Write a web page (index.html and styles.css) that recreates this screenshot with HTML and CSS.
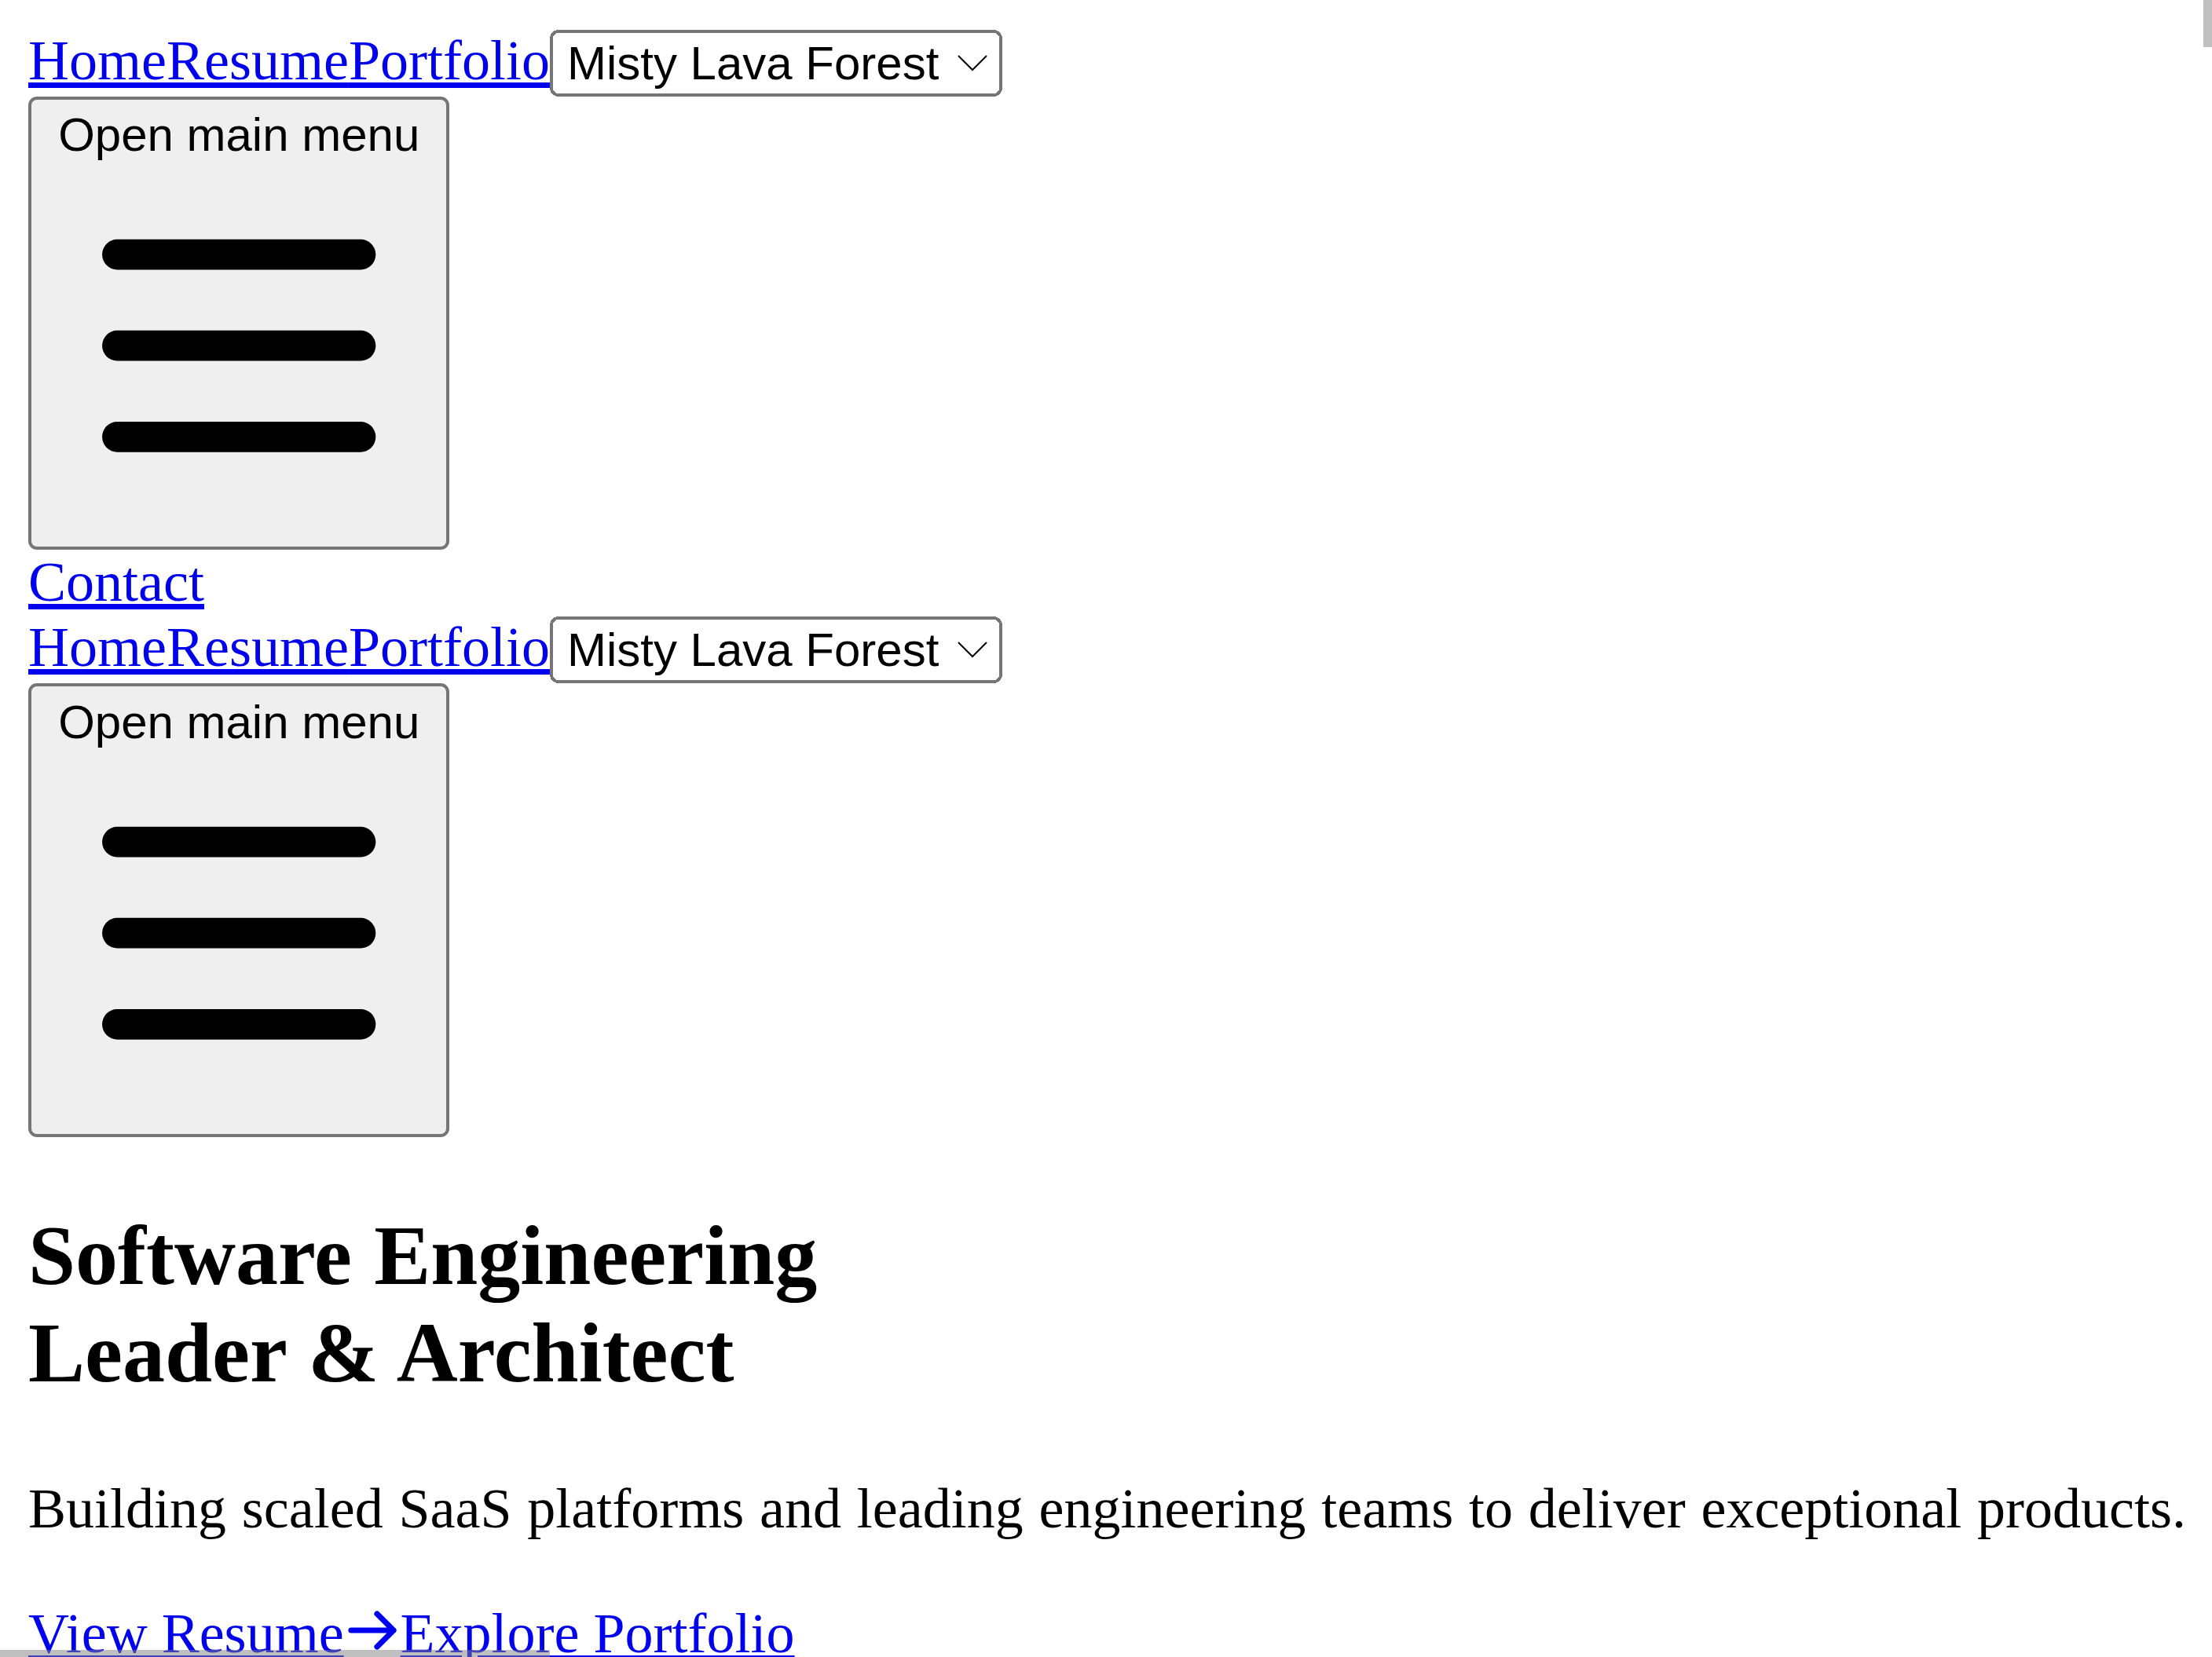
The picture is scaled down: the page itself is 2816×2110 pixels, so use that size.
FILE: index.html
```html
<!DOCTYPE html>
<html lang="en" class="zoomed">
<head>
<meta charset="utf-8">
<title>Software Engineering Leader &amp; Architect</title>
<link rel="stylesheet" href="styles.css">
</head>
<body class="page">
<header class="site-header">
  <nav class="nav">
    <div class="nav-main">
      <div class="nav-bar"><a href="#">Home</a><a href="#">Resume</a><a href="#">Portfolio</a><select class="theme-select" aria-label="Theme"><option>Misty Lava Forest</option></select></div>
      <div class="menu-wrap">
        <button class="menu-btn" type="button"><span class="menu-label">Open main menu</span><svg class="menu-icon" viewBox="0 0 24 24" fill="none" stroke="currentColor" stroke-width="2" stroke-linecap="round" stroke-linejoin="round" aria-hidden="true"><path d="M4 6h16M4 12h16M4 18h16"/></svg></button>
      </div>
    </div>
    <div class="nav-contact"><a href="#">Contact</a></div>
    <div class="mobile-menu">
      <div class="nav-bar"><a href="#">Home</a><a href="#">Resume</a><a href="#">Portfolio</a><select class="theme-select" aria-label="Theme"><option>Misty Lava Forest</option></select></div>
      <div class="menu-wrap">
        <button class="menu-btn" type="button"><span class="menu-label">Open main menu</span><svg class="menu-icon" viewBox="0 0 24 24" fill="none" stroke="currentColor" stroke-width="2" stroke-linecap="round" stroke-linejoin="round" aria-hidden="true"><path d="M4 6h16M4 12h16M4 18h16"/></svg></button>
      </div>
    </div>
  </nav>
</header>
<main class="main">
  <section class="hero">
    <h1 class="hero-title">Software Engineering<br>Leader &amp; Architect</h1>
    <p class="hero-text">Building scaled SaaS platforms and leading engineering teams to deliver exceptional products.</p>
    <div class="hero-actions"><a href="#">View Resume<svg class="arrow-icon" viewBox="0 0 24 24" fill="none" stroke="currentColor" stroke-width="2.4" stroke-linecap="round" stroke-linejoin="round" aria-hidden="true"><path d="M14 5l7 7m0 0l-7 7m7-7H3"/></svg></a><a href="#">Explore Portfolio</a></div>
  </section>
</main>
<div class="scroll-thumb-v"></div>
<div class="scroll-thumb-h"></div>
</body>
</html>
```

FILE: styles.css
```css
html.zoomed {
  zoom: 4.5;
  overflow: hidden;
  background: #ffffff;
}

.page {
  margin: 8px;
  font-family: "Liberation Serif", "Times New Roman", serif;
  font-size: 16px;
  color: #000000;
}

.page a {
  color: #0000ee;
}

.theme-select,
.menu-btn {
  font-family: "Liberation Sans", Arial, sans-serif;
  font-size: 13.333px;
}

.theme-select {
  padding: 0.2px 0.8px 0.2px 0;
}

.menu-label {
  display: block;
  line-height: 16px;
}

.menu-icon {
  width: 103.2px;
  height: 103.2px;
}

.hero-title {
  font-size: 24px;
  margin: 19.92px 0 21.1px;
  font-weight: bold;
  word-spacing: 0.3px;
}

.hero-text {
  margin: 16px 0 16.8px;
  white-space: nowrap;
  word-spacing: 0.4px;
}

.arrow-icon {
  width: 16px;
  height: 16px;
  vertical-align: -1.8px;
}

.scroll-thumb-v {
  position: fixed;
  top: 0;
  right: 0;
  width: 2.4px;
  height: 13.4px;
  background: rgba(128, 128, 128, 0.5);
}

.scroll-thumb-h {
  position: fixed;
  left: 0;
  bottom: 0;
  width: 155.5px;
  height: 2px;
  background: rgba(128, 128, 128, 0.5);
}
```
